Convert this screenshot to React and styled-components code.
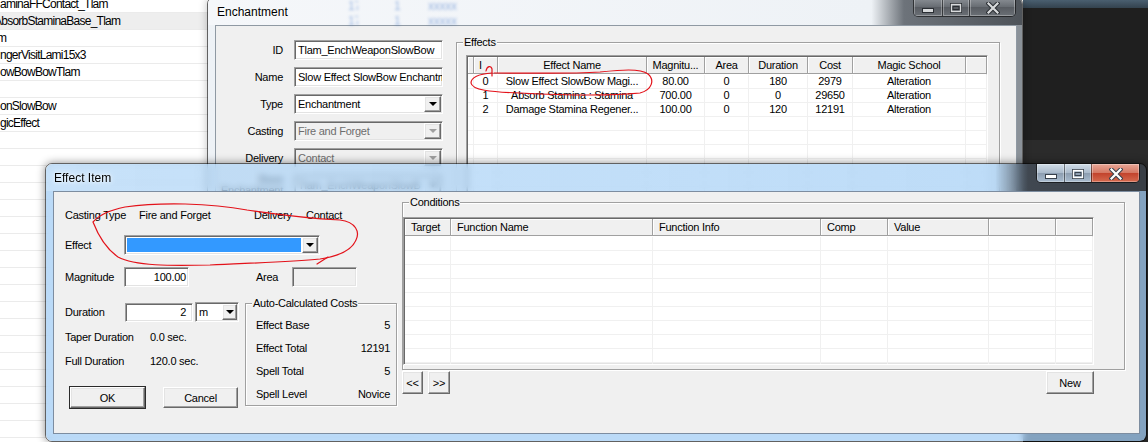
import React from "react";
import styled, { createGlobalStyle } from "styled-components";

const UI_FONT = `"Liberation Sans", Arial, sans-serif`;

const GlobalStyle = createGlobalStyle`
  *, *::before, *::after { box-sizing: border-box; }
  html, body { margin: 0; padding: 0; background: #fff; overflow: hidden; }
  body { font-family: ${UI_FONT}; }
`;

// classic 3d borders
const sunken = `
  border-style: solid;
  border-width: 1px;
  border-color: #a0a0a0 #fff #fff #a0a0a0;
  box-shadow: inset 1px 1px 0 #696969, inset -1px -1px 0 #e3e3e3;
`;

const raised = `
  border-style: solid;
  border-width: 1px;
  border-color: #fff #696969 #696969 #fff;
  box-shadow: inset -1px -1px 0 #a0a0a0, inset 1px 1px 0 #e3e3e3;
`;

const Desktop = styled.div`
  position: relative;
  width: 1148px;
  height: 442px;
  overflow: hidden;
  background: #fff;
  font-family: ${UI_FONT};
  font-size: 11px;
  letter-spacing: -0.25px;
  color: #000;
`;

/* object window list behind the dialogs */
const ObjectList = styled.div`
  display: flex;
  flex-direction: column;
  width: 420px;
  margin-top: -4px;
`;

const ListRow = styled.div`
  height: 17px;
  line-height: 16px;
  border-bottom: 1px solid #ebebeb;
  background: ${(p) => (p.$selected ? "#eeeeee" : "#fff")};
  font-size: 12px;
  letter-spacing: -0.75px;
  white-space: nowrap;
  overflow: hidden;
  text-indent: ${(p) => p.$indent || 0}px;
`;

const DarkApp = styled.div`
  position: absolute;
  left: 1023px;
  top: 0;
  width: 125px;
  height: 442px;
  display: flex;
  flex-direction: column;
`;

const DarkStrip = styled.div`
  height: ${(p) => p.$h}px;
  flex: ${(p) => (p.$h ? "none" : 1)};
  background: ${(p) => p.$bg};
`;

/* windows */
const Window = styled.div`
  position: absolute;
  left: ${(p) => p.$x}px;
  top: ${(p) => p.$y}px;
  width: ${(p) => p.$w}px;
  height: ${(p) => p.$h}px;
  display: flex;
  flex-direction: column;
  border: 1px solid rgba(0, 0, 0, 0.62);
  border-radius: 7px;
  overflow: hidden;
  box-shadow: 0 0 9px rgba(0, 0, 0, ${(p) => (p.$active ? 0.45 : 0.25)});
`;

const TitleBar = styled.div`
  position: relative;
  height: 27px;
  flex: none;
  display: flex;
  align-items: center;
  padding: 0 6px 0 ${(p) => p.$pl}px;
  background: ${(p) => p.$bg};
  ${(p) => p.$glass && "backdrop-filter: blur(3px);"}
`;

const Title = styled.span`
  position: relative;
  font-size: 12px;
  letter-spacing: 0;
  color: #000;
  text-shadow: 0 0 6px rgba(255, 255, 255, 0.95), 0 0 3px rgba(255, 255, 255, 0.8);
`;

/* blurred list seen through the inactive glass frame */
const Ghost = styled.div`
  position: absolute;
  left: 0;
  top: 0;
  display: flex;
  flex-direction: column;
  gap: 3px;
  padding-top: 1px;
  filter: blur(1.4px);
  opacity: 0.5;
`;

const GhostRow = styled.div`
  display: flex;
  height: 12px;
  font-size: 12px;
  color: #3f74c8;
`;

const GhostCell = styled.span`
  width: ${(p) => p.$w}px;
  margin-left: ${(p) => p.$ml || 0}px;
  white-space: nowrap;
  overflow: hidden;
`;

const CaptionGroup = styled.div`
  display: flex;
  align-self: flex-start;
  margin-left: auto;
  height: 19px;
  border: 1px solid rgba(0, 0, 0, 0.55);
  border-top: none;
  border-radius: 0 0 5px 5px;
  overflow: hidden;
`;

const CapBtn = styled.div`
  width: ${(p) => p.$w}px;
  height: 100%;
  display: flex;
  align-items: center;
  justify-content: center;
  padding-top: 1px;
  background: ${(p) => p.$bg};
  border-left: ${(p) => (p.$first ? "none" : "1px solid rgba(0,0,0,0.45)")};
  box-shadow: inset 0 0 0 1px rgba(255, 255, 255, 0.3);
`;

const Body = styled.div`
  flex: 1;
  min-height: 0;
  display: flex;
  padding: ${(p) => p.$pad};
  background: ${(p) => p.$bg};
  ${(p) => p.$glass && "backdrop-filter: blur(3px);"}
`;

const Client = styled.div`
  flex: 1;
  min-width: 0;
  display: flex;
  align-items: flex-start;
  background: #f0f0f0;
  border: 1px solid ${(p) => p.$edge};
  overflow: hidden;
`;

/* controls */
const Field = styled.div`
  ${sunken}
  flex: none;
  width: ${(p) => p.$w}px;
  height: ${(p) => p.$h || 20}px;
  display: flex;
  align-items: center;
  justify-content: ${(p) => (p.$right ? "flex-end" : "flex-start")};
  padding: ${(p) => (p.$right ? `0 ${p.$pr || 3}px 0 0` : "0 0 0 3px")};
  background: ${(p) => (p.$disabled ? "#f0f0f0" : "#fff")};
  color: ${(p) => (p.$disabled ? "#6d6d6d" : "#000")};
  white-space: nowrap;
  overflow: hidden;
`;

const Combo = styled.div`
  ${sunken}
  flex: none;
  width: ${(p) => p.$w}px;
  height: ${(p) => p.$h || 20}px;
  margin-left: ${(p) => p.$ml || 0}px;
  display: flex;
  padding: 1px;
  background: ${(p) => (p.$disabled ? "#f0f0f0" : "#fff")};
  color: ${(p) => (p.$disabled ? "#6d6d6d" : "#000")};
`;

const ComboText = styled.div`
  flex: 1;
  min-width: 0;
  display: flex;
  align-items: center;
  padding-left: 2px;
  margin: ${(p) => (p.$fill ? "1px" : 0)};
  background: ${(p) => p.$fill || "transparent"};
  white-space: nowrap;
  overflow: hidden;
`;

const DropBtn = styled.div`
  ${raised}
  width: ${(p) => p.$w || 16}px;
  flex: none;
  display: flex;
  align-items: center;
  justify-content: center;
  background: #f0f0f0;
`;

const Arrow = styled.span`
  width: 0;
  height: 0;
  border-left: 4px solid transparent;
  border-right: 4px solid transparent;
  border-top: 4px solid ${(p) => (p.$disabled ? "#a0a0a0" : "#000")};
`;

const Btn = styled.div`
  ${raised}
  flex: none;
  width: ${(p) => p.$w}px;
  height: ${(p) => p.$h || 21}px;
  display: flex;
  align-items: center;
  justify-content: center;
  background: #f0f0f0;
  ${(p) => p.$default && "outline: 1px solid #2b2b2b;"}
`;

const Group = styled.fieldset`
  margin: 0;
  min-width: 0;
  flex: none;
  width: ${(p) => p.$w}px;
  padding: ${(p) => p.$pad};
  border: 1px solid #a0a0a0;
  box-shadow: inset 1px 1px 0 #fff, 1px 1px 0 #fff;
`;

const Legend = styled.legend`
  padding: 0 1px;
  margin-left: ${(p) => p.$ml}px;
  line-height: 13px;
  font-size: 11px;
  background: #f0f0f0;
`;

const ListView = styled.div`
  ${sunken}
  flex: none;
  width: ${(p) => p.$w}px;
  height: ${(p) => p.$h}px;
  background: #fff;
  overflow: hidden;
  display: flex;
  flex-direction: column;
`;

const ListGrid = styled.div`
  display: grid;
  grid-template-columns: ${(p) => p.$cols};
  padding: 1px 0 0 1px;
`;

const HeadCell = styled.div`
  height: 17px;
  line-height: 16px;
  background: #f0f0f0;
  border-right: 1px solid #a0a0a0;
  border-bottom: 1px solid #a0a0a0;
  box-shadow: inset 1px 1px 0 #fff;
  text-align: ${(p) => p.$align || "center"};
  padding: 0 ${(p) => (p.$align === "left" ? p.$pl ?? 6 : 2)}px;
  white-space: nowrap;
  overflow: hidden;
`;

const Cell = styled.div`
  height: 14px;
  line-height: 13px;
  margin-top: ${(p) => (p.$first ? 1 : 0)}px;
  border-right: 1px solid #f0f0f0;
  border-bottom: 1px solid #f0f0f0;
  text-align: center;
  white-space: nowrap;
  overflow: hidden;
`;

/* enchantment form */
const FormCol = styled.div`
  display: flex;
  flex-direction: column;
  gap: 7px;
  padding-top: 14px;
`;

const FormRow = styled.div`
  display: flex;
  align-items: center;
  gap: 9px;
  height: 20px;
`;

const FormLabel = styled.div`
  width: 69px;
  padding-right: 2px;
  text-align: right;
  line-height: 11px;
`;

const EffectsCol = styled.div`
  margin-left: 13px;
  padding-top: 10px;
`;

/* effect item */
const LeftPane = styled.div`
  width: 344px;
  flex: none;
  display: flex;
  flex-direction: column;
  padding-left: 11px;
`;

const Line = styled.div`
  display: flex;
  align-items: center;
  height: ${(p) => p.$h || 20}px;
  margin-top: ${(p) => p.$mt || 0}px;
  padding-left: ${(p) => p.$pl || 0}px;
  gap: ${(p) => p.$gap || 0}px;
`;

const Txt = styled.span`
  flex: none;
  width: ${(p) => (p.$w ? `${p.$w}px` : "auto")};
  margin-left: ${(p) => p.$ml || 0}px;
  white-space: nowrap;
`;

const Lower = styled.div`
  display: flex;
  align-items: flex-start;
  margin-top: 10px;
`;

const SubCol = styled.div`
  width: 180px;
  flex: none;
  display: flex;
  flex-direction: column;
  padding-top: 5px;
`;

const CostRow = styled.div`
  display: flex;
  justify-content: space-between;
  align-items: center;
  height: 23px;
`;

const RightPane = styled.div`
  margin-left: 4px;
  padding-top: 4px;
  display: flex;
  flex-direction: column;
`;

const NavRow = styled.div`
  display: flex;
  justify-content: space-between;
  width: 692px;
  margin-top: 1px;
`;

const NavGroup = styled.div`
  display: flex;
  gap: 5px;
`;

const Ink = styled.svg`
  position: absolute;
  left: 0;
  top: 0;
  pointer-events: none;
  z-index: 5;
`;

const listItems = [
  { t: "aminaFFContact_Tlam" },
  { t: "AbsorbStaminaBase_Tlam", i: -6, sel: true },
  { t: "m", i: -3 },
  { t: "ngerVisitLami15x3" },
  { t: "owBowBowTlam" },
  { t: "" },
  { t: "onSlowBow" },
  { t: "gicEffect" },
];

const effectCols = "6px 24px 149px 58px 44px 59px 45px 113px 1fr";
const effectHead = [
  { t: "" },
  { t: "I", a: "left", pl: 5 },
  { t: "Effect Name" },
  { t: "Magnitu..." },
  { t: "Area" },
  { t: "Duration" },
  { t: "Cost" },
  { t: "Magic School" },
  { t: "" },
];
const effectRows = [
  ["", "0", "Slow Effect SlowBow Magi...", "80.00", "0", "180", "2979", "Alteration", ""],
  ["", "1", "Absorb Stamina : Stamina", "700.00", "0", "0", "29650", "Alteration", ""],
  ["", "2", "Damage Stamina Regener...", "100.00", "0", "120", "12191", "Alteration", ""],
];

const condCols = "46px 202px 168px 67px 101px 67px 1fr";
const condHead = ["Target", "Function Name", "Function Info", "Comp", "Value", "", ""];

function Table({ cols, head, rows, count, w, h }) {
  const n = head.length;
  const all = [...rows];
  while (all.length < count) all.push(Array(n).fill(""));
  return (
    <ListView $w={w} $h={h}>
      <ListGrid $cols={cols}>
        {head.map((c, i) => (
          <HeadCell key={"h" + i} $align={c.a} $pl={c.pl}>
            {c.t}
          </HeadCell>
        ))}
        {all.map((r, ri) =>
          r.map((c, ci) => (
            <Cell key={ri + "-" + ci} $first={ri === 0}>
              {c}
            </Cell>
          ))
        )}
      </ListGrid>
    </ListView>
  );
}

function CaptionButtons({ dim, widths }) {
  const edge = dim ? "#2a2e33" : "#38414c";
  const face = dim ? "#d8dadc" : "#fff";
  const plain = dim
    ? "linear-gradient(#8c9197, #676c72 50%, #575b61 51%, #6b7076)"
    : "linear-gradient(#d2dde8, #a9b9ca 50%, #8c9db0 51%, #a9bccf)";
  const close = dim
    ? "linear-gradient(#8c9197, #676c72 50%, #575b61 51%, #6b7076)"
    : "linear-gradient(#e9a797, #d47762 50%, #c2432c 51%, #d56a4f)";
  return (
    <CaptionGroup>
      <CapBtn $first $w={widths[0]} $bg={plain}>
        <svg width="12" height="10" viewBox="0 0 12 10">
          <rect x="0.5" y="5.5" width="11" height="4" fill={face} stroke={edge} />
        </svg>
      </CapBtn>
      <CapBtn $w={widths[1]} $bg={plain}>
        <svg width="12" height="10" viewBox="0 0 12 10">
          <rect x="0.5" y="0.5" width="11" height="9" fill="none" stroke={edge} />
          <rect x="1.5" y="1.5" width="9" height="7" fill="none" stroke={face} strokeWidth="1.4" />
          <rect x="3" y="3.5" width="6" height="3" fill="none" stroke={edge} />
        </svg>
      </CapBtn>
      <CapBtn $w={widths[2]} $bg={close}>
        <svg width="14" height="12" viewBox="0 0 14 12">
          <path d="M2.5 1.5 L11.5 10.5 M11.5 1.5 L2.5 10.5" stroke={edge} strokeWidth="4.2" strokeLinecap="square" />
          <path d="M2.5 1.5 L11.5 10.5 M11.5 1.5 L2.5 10.5" stroke={face} strokeWidth="2.2" strokeLinecap="square" />
        </svg>
      </CapBtn>
    </CaptionGroup>
  );
}

function EnchantmentWindow() {
  return (
    <Window $x={207} $y={-3} $w={816} $h={236}>
      <TitleBar
        $pl={9}
        $bg="linear-gradient(to right, #f5f7fa 0%, #eef2f6 81.5%, #6d737a 85.5%, #4e5359 100%)"
      >
        <Ghost>
          {[0, 1].map((k) => (
            <GhostRow key={k}>
              <GhostCell $ml={140} $w={10}>17</GhostCell>
              <GhostCell $ml={36} $w={10}>1</GhostCell>
              <GhostCell $ml={24} $w={32}>xxxxx</GhostCell>
            </GhostRow>
          ))}
        </Ghost>
        <Title>Enchantment</Title>
        <CaptionButtons dim widths={[28, 27, 46]} />
      </TitleBar>
      <Body
        $pad="0 5px 0 7px"
        $bg="linear-gradient(to right, #eef2f6 0, #e8edf2 calc(100% - 6px), #8b9299 calc(100% - 5px))"
      >
        <Client $edge="#8f99a3">
          <FormCol>
            <FormRow>
              <FormLabel>ID</FormLabel>
              <Field $w={149}>Tlam_EnchWeaponSlowBow</Field>
            </FormRow>
            <FormRow>
              <FormLabel>Name</FormLabel>
              <Field $w={149}>Slow Effect SlowBow Enchantment</Field>
            </FormRow>
            <FormRow>
              <FormLabel>Type</FormLabel>
              <Combo $w={149}>
                <ComboText>Enchantment</ComboText>
                <DropBtn $w={17}>
                  <Arrow />
                </DropBtn>
              </Combo>
            </FormRow>
            <FormRow>
              <FormLabel>Casting</FormLabel>
              <Combo $w={149} $disabled>
                <ComboText>Fire and Forget</ComboText>
                <DropBtn $w={17}>
                  <Arrow $disabled />
                </DropBtn>
              </Combo>
            </FormRow>
            <FormRow>
              <FormLabel>Delivery</FormLabel>
              <Combo $w={149} $disabled>
                <ComboText>Contact</ComboText>
                <DropBtn $w={17}>
                  <Arrow $disabled />
                </DropBtn>
              </Combo>
            </FormRow>
            <FormRow>
              <FormLabel>
                Base
                <br />
                Enchantment
              </FormLabel>
              <Combo $w={149}>
                <ComboText>Tlam_EnchWeaponSlowB</ComboText>
                <DropBtn $w={17}>
                  <Arrow />
                </DropBtn>
              </Combo>
            </FormRow>
          </FormCol>
          <EffectsCol>
            <Group $w={544} $pad="6px 11px 0 9px">
              <Legend $ml={-3}>Effects</Legend>
              <Table cols={effectCols} head={effectHead} rows={effectRows} count={10} w={522} h={140} />
            </Group>
          </EffectsCol>
        </Client>
      </Body>
    </Window>
  );
}

function EffectItemWindow() {
  return (
    <Window $x={45} $y={163} $w={1102} $h={279} $active>
      <TitleBar
        $pl={8}
        $glass
        $bg="linear-gradient(to right, rgba(170,210,246,0.66) 0%, rgba(165,207,245,0.72) 86.3%, rgba(66,74,84,0.93) 89.3%, rgba(58,63,70,0.95) 100%)"
      >
        <Title>Effect Item</Title>
        <CaptionButtons widths={[27, 27, 48]} />
      </TitleBar>
      <Body $glass $pad="0 6px 7px 7px" $bg="rgba(163,205,244,0.74)">
        <Client $edge="#7d8da0">
          <LeftPane>
            <Line $h={14} $mt={16}>
              <Txt $w={74}>Casting Type</Txt>
              <Txt $w={115}>Fire and Forget</Txt>
              <Txt $w={52}>Delivery</Txt>
              <Txt>Contact</Txt>
            </Line>
            <Line $mt={13}>
              <Txt $w={59}>Effect</Txt>
              <Combo $w={196}>
                <ComboText $fill="#3399ff" />
                <DropBtn>
                  <Arrow />
                </DropBtn>
              </Combo>
            </Line>
            <Line $mt={12}>
              <Txt $w={59}>Magnitude</Txt>
              <Field $w={65} $right $pr={2}>
                100.00
              </Field>
              <Txt $w={36} $ml={67}>
                Area
              </Txt>
              <Field $w={65} $disabled />
            </Line>
            <Lower>
              <SubCol>
                <Line>
                  <Txt $w={60}>Duration</Txt>
                  <Field $w={68} $h={19} $right $pr={6}>
                    2
                  </Field>
                  <Combo $w={44} $ml={2}>
                    <ComboText>m</ComboText>
                    <DropBtn $w={15}>
                      <Arrow />
                    </DropBtn>
                  </Combo>
                </Line>
                <Line $h={14} $mt={8}>
                  <Txt $w={85}>Taper Duration</Txt>
                  <Txt>0.0 sec.</Txt>
                </Line>
                <Line $h={14} $mt={10}>
                  <Txt $w={85}>Full Duration</Txt>
                  <Txt>120.0 sec.</Txt>
                </Line>
                <Line $h={21} $mt={19} $gap={18} $pl={5}>
                  <Btn $w={75} $default>
                    OK
                  </Btn>
                  <Btn $w={75}>Cancel</Btn>
                </Line>
              </SubCol>
              <Group $w={152} $pad="3px 6px 0 10px">
                <Legend $ml={-4}>Auto-Calculated Costs</Legend>
                <CostRow>
                  <span>Effect Base</span>
                  <span>5</span>
                </CostRow>
                <CostRow>
                  <span>Effect Total</span>
                  <span>12191</span>
                </CostRow>
                <CostRow>
                  <span>Spell Total</span>
                  <span>5</span>
                </CostRow>
                <CostRow>
                  <span>Spell Level</span>
                  <span>Novice</span>
                </CostRow>
              </Group>
            </Lower>
          </LeftPane>
          <RightPane>
            <Group $w={723} $pad="8px 30px 4px 0">
              <Legend $ml={6}>Conditions</Legend>
              <Table
                cols={condCols}
                head={condHead.map((t) => ({ t, a: "left" }))}
                rows={[]}
                count={10}
                w={691}
                h={148}
              />
            </Group>
            <NavRow>
              <NavGroup>
                <Btn $w={21} $h={23}>
                  &lt;&lt;
                </Btn>
                <Btn $w={22} $h={23}>
                  &gt;&gt;
                </Btn>
              </NavGroup>
              <Btn $w={48} $h={23}>
                New
              </Btn>
            </NavRow>
          </RightPane>
        </Client>
      </Body>
    </Window>
  );
}

function Annotations() {
  return (
    <Ink width="1148" height="442" viewBox="0 0 1148 442">
      <g fill="none" stroke="#e3121a" strokeWidth="1.2" strokeLinecap="round" strokeLinejoin="round">
        <path d="M486 71 C487 66, 491 65, 492 69 L492 76" />
        <path d="M494 73 C530 73, 570 74, 600 72 C620 70, 640 68, 648 74 C655 80, 652 90, 640 93 C610 96, 560 95, 520 93 C490 92, 472 90, 471 83 C471 77, 480 74, 492 73" />
        <path d="M93 222 C100 214, 110 210, 125 207 C160 202, 210 203, 247 210 C275 214, 300 218, 340 220 C356 222, 360 232, 356 240 C352 250, 340 256, 320 259 C290 262, 250 263, 210 265 C170 266, 135 266, 118 257 C108 250, 100 240, 93 222" />
        <path d="M328 257 L317 264" />
      </g>
    </Ink>
  );
}

export default function App() {
  const rows = [...listItems];
  while (rows.length < 28) rows.push({ t: "" });
  return (
    <>
      <GlobalStyle />
      <Desktop>
        <ObjectList>
          {rows.map((r, i) => (
            <ListRow key={i} $selected={r.sel} $indent={r.i}>
              {r.t}
            </ListRow>
          ))}
        </ObjectList>
        <DarkApp>
          <DarkStrip $h={8} $bg="linear-gradient(#4a5f70, #33424e)" />
          <DarkStrip $h={132} $bg="#1f1f1f" />
          <DarkStrip $bg="#2b2b2b" />
        </DarkApp>
        <EnchantmentWindow />
        <EffectItemWindow />
        <Annotations />
      </Desktop>
    </>
  );
}
